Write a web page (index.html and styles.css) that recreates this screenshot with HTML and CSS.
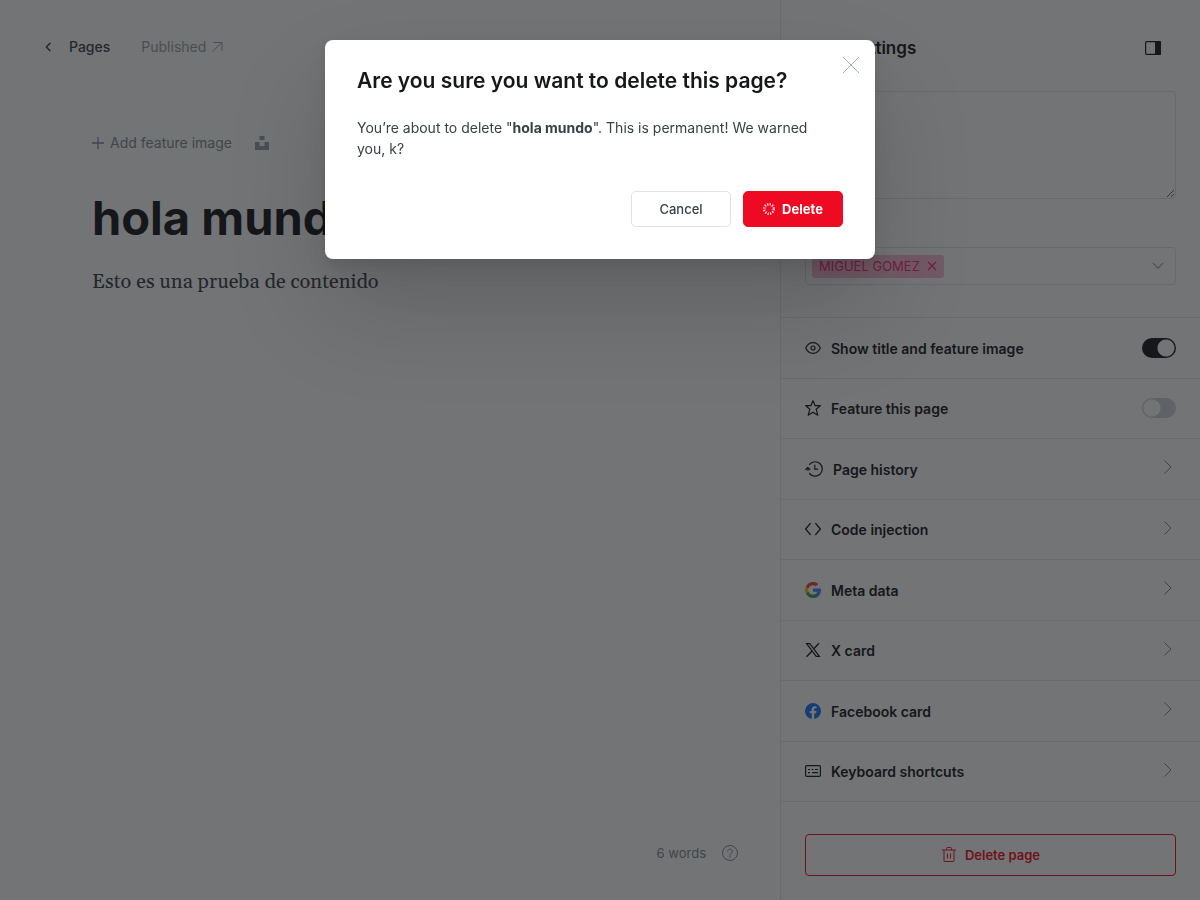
FILE: index.html
```html
<!DOCTYPE html>
<html lang="en">
<head>
<meta charset="utf-8">
<meta name="viewport" content="width=device-width, initial-scale=1">
<title>Delete page</title>
<link rel="stylesheet" href="styles.css">
</head>
<body>
<div class="app">
  <main class="editor">
    <header class="editor-header">
      <a class="back-link" href="#pages">
        <svg width="8" height="10" viewBox="0 0 8 10" fill="none" stroke="currentColor" stroke-width="1.5" stroke-linecap="round" stroke-linejoin="round"><path d="M6 1.300 2.300 5 6 8.700"/></svg>
        Pages
      </a>
      <a class="status-link" href="#published">
        Published
        <svg width="11" height="12" viewBox="0 0 11 12" fill="none" stroke="currentColor" stroke-width="1"><path d="M.5 10.500 10 1.500M1.500 1.500H10v8.500"/></svg>
      </a>
    </header>
    <article class="canvas">
      <div class="feature-image">
        <button class="add-image" type="button">
          <svg width="12" height="12" viewBox="0 0 12 12" fill="none" stroke="currentColor" stroke-width="1.3"><path d="M6 0v12M0 6h12"/></svg>
          Add feature image
        </button>
        <button class="unsplash" type="button" aria-label="Unsplash">
          <svg width="14" height="14" viewBox="0 0 14 14" fill="currentColor"><path d="M4.500 0h5v4h-5zM0 6h4.500v4h5V6H14v8H0z"/></svg>
        </button>
      </div>
      <h1 class="page-title">hola mundo</h1>
      <p class="page-body">Esto es una prueba de contenido</p>
    </article>
    <footer class="editor-footer">
      <span>6 words</span>
      <a class="help" href="#help" aria-label="Help">
        <svg width="16" height="16" viewBox="0 0 16 16" fill="none" stroke="currentColor" stroke-width="1"><circle cx="8" cy="8" r="7.500"/><path d="M5.700 6.300a2.300 2.300 0 1 1 3.500 2C8.400 8.800 8 9.200 8 10.200" stroke-linecap="round"/><circle cx="8" cy="12" r=".3"/></svg>
      </a>
    </footer>
  </main>

  <aside class="settings">
    <header class="settings-header">
      <h2 class="settings-title">Page settings</h2>
      <button class="panel-toggle" type="button" aria-label="Settings">
        <svg width="16" height="14" viewBox="0 0 16 14"><rect x=".6" y=".6" width="14.800" height="12.800" rx="1" fill="none" stroke="currentColor" stroke-width="1.200"/><path d="M10 0h5a1 1 0 0 1 1 1v12a1 1 0 0 1-1 1h-5z" fill="currentColor"/></svg>
      </button>
    </header>
    <form class="fields">
      <textarea class="excerpt" aria-label="Excerpt"></textarea>
      <div class="authors" role="group" aria-label="Authors">
        <span class="tag">MIGUEL GOMEZ
          <button class="tag-remove" type="button" aria-label="Remove">
            <svg width="10" height="10" viewBox="0 0 10 10" fill="none" stroke="currentColor" stroke-width="1.300"><path d="m1 1 8 8M9 1 1 9"/></svg>
          </button>
        </span>
        <svg class="down" width="12" height="8" viewBox="0 0 12 8" fill="none" stroke="currentColor" stroke-width="1.200"><path d="m1 1.200 5 5 5-5"/></svg>
      </div>
    </form>
    <ul class="options">
      <li class="option">
        <label class="row" for="show-title">
          <svg class="icon" viewBox="0 0 16 16" fill="none" stroke="currentColor" stroke-width="1.200"><path d="M.7 8S3.200 2.700 8 2.700 15.300 8 15.300 8 12.800 13.300 8 13.300.7 8 .7 8z"/><circle cx="8" cy="8" r="2"/></svg>
          <span>Show title and feature image</span>
          <input class="switch" id="show-title" type="checkbox" checked>
        </label>
      </li>
      <li class="option">
        <label class="row" for="feature-page">
          <svg class="icon" viewBox="0 0 16 16" fill="none" stroke="currentColor" stroke-width="1.200" stroke-linejoin="round"><path d="m8 .7 2.100 5h5.200l-4.200 3.500 1.700 6L8 12.200l-4.800 3 1.700-6L.7 5.700h5.200z"/></svg>
          <span>Feature this page</span>
          <input class="switch" id="feature-page" type="checkbox">
        </label>
      </li>
      <li class="option">
        <button class="row" type="button">
          <svg class="icon icon-wide" viewBox="0 0 18 16" fill="none" stroke="currentColor" stroke-width="1.200" stroke-linecap="round" stroke-linejoin="round"><path d="M4.600 3.300A7.200 7.200 0 1 1 4.500 12.500M2.900 9.300A7.200 7.200 0 0 1 3.100 6.600M.8 8.500l2-2 2 2M9.800 4.200v4h2.800"/></svg>
          <span>Page history</span>
          <svg class="chevron" viewBox="0 0 8 14"><path d="m.5.500 6.500 6.500-6.500 6.500"/></svg>
        </button>
      </li>
      <li class="option">
        <button class="row" type="button">
          <svg class="icon" viewBox="0 0 16 16" fill="none" stroke="currentColor" stroke-width="1.200" stroke-linecap="round" stroke-linejoin="round"><path d="M5.300 2.500.6 8l4.700 5.500M10.700 2.500 15.400 8l-4.700 5.500"/></svg>
          <span>Code injection</span>
          <svg class="chevron" viewBox="0 0 8 14"><path d="m.5.500 6.500 6.500-6.500 6.500"/></svg>
        </button>
      </li>
      <li class="option">
        <button class="row" type="button">
          <svg class="icon" viewBox="0 0 24 24"><path fill="#4285f4" d="M23.500 9.800H12v4.700h6.500c-.6 3-3 4.600-6.500 4.600l4 4.200C21.200 21.500 24 17.500 24 12.300c0-.9-.2-1.700-.5-2.500z"/><path fill="#34a853" d="M1.300 17.300C3.200 21.300 7.300 24 12 24c3 0 5.700-1 7.800-2.800L16 18.100c-1.100.7-2.500 1.100-4 1.100-3.200 0-5.800-2-6.800-4.900z"/><path fill="#fbbc05" d="M5.200 14.300a7 7 0 0 1 0-4.600l-3.900-3a12 12 0 0 0 0 10.600z"/><path fill="#ea4335" d="M12 4.800c1.700 0 3.200.6 4.400 1.600l3.500-3.500A12 12 0 0 0 1.300 6.700l3.900 3C6.200 6.800 8.800 4.800 12 4.800z"/></svg>
          <span>Meta data</span>
          <svg class="chevron" viewBox="0 0 8 14"><path d="m.5.500 6.500 6.500-6.500 6.500"/></svg>
        </button>
      </li>
      <li class="option">
        <button class="row" type="button">
          <svg class="icon" viewBox="0 0 16 16" fill="none" stroke="currentColor"><path stroke-width="1.200" d="M1.600 1.600h3.200l9.600 12.800h-3.200z"/><path stroke-width="1.300" d="m14 1.200-5.200 5.600M7.100 9 1.500 14.800"/></svg>
          <span>X card</span>
          <svg class="chevron" viewBox="0 0 8 14"><path d="m.5.500 6.500 6.500-6.500 6.500"/></svg>
        </button>
      </li>
      <li class="option">
        <button class="row" type="button">
          <svg class="icon" viewBox="0 0 24 24"><path fill="#1877f2" d="M24 12a12 12 0 1 0-13.900 11.900v-8.400h-3V12h3V9.400c0-3 1.800-4.700 4.500-4.700 1.300 0 2.700.2 2.700.2v3h-1.500c-1.500 0-2 .9-2 1.900V12h3.400l-.5 3.500h-2.800v8.400A12 12 0 0 0 24 12z"/></svg>
          <span>Facebook card</span>
          <svg class="chevron" viewBox="0 0 8 14"><path d="m.5.500 6.500 6.500-6.500 6.500"/></svg>
        </button>
      </li>
      <li class="option">
        <button class="row" type="button">
          <svg class="icon" viewBox="0 0 16 16" fill="none" stroke="currentColor" stroke-width="1.200"><rect x=".6" y="2.600" width="14.800" height="10.800" rx="1.200"/><path d="M3 6.500h2M6.500 6.500h2M10 6.500h3M3 9.700h2M7 9.700h6"/></svg>
          <span>Keyboard shortcuts</span>
          <svg class="chevron" viewBox="0 0 8 14"><path d="m.5.500 6.500 6.500-6.500 6.500"/></svg>
        </button>
      </li>
    </ul>
    <footer class="settings-footer">
      <button class="delete-page" type="button">
        <svg width="16" height="16" viewBox="0 0 16 16" fill="none" stroke="currentColor" stroke-width="1"><path d="M1 3h14M3 3v10.500a1 1 0 0 0 1 1h8a1 1 0 0 0 1-1V3M5.500 3V1.500a1 1 0 0 1 1-1h3a1 1 0 0 1 1 1V3M6.500 6.500v5M9.500 6.500v5"/></svg>
        Delete page
      </button>
    </footer>
  </aside>
</div>

<div class="backdrop">
  <section class="modal" role="dialog" aria-modal="true" aria-labelledby="modal-title">
    <h2 class="modal-title" id="modal-title">Are you sure you want to delete this page?</h2>
    <button class="modal-close" type="button" aria-label="Close">
      <svg width="16" height="16" viewBox="0 0 16 16" fill="none" stroke="currentColor" stroke-width=".7"><path d="m0 0 16 16M16 0 0 16"/></svg>
    </button>
    <p class="modal-text">You’re about to delete "<strong>hola mundo</strong>". This is permanent! We warned you, k?</p>
    <div class="modal-actions">
      <button class="btn" type="button">Cancel</button>
      <button class="btn btn-red" type="button">
        <svg width="12" height="12" viewBox="0 0 12 12" fill="none" stroke="currentColor" stroke-width="2.400"><circle cx="6" cy="6" r="4.800" stroke-dasharray="1.300 1.213" opacity=".85"/></svg>
        Delete
      </button>
    </div>
  </section>
</div>
</body>
</html>
```
FILE: styles.css
```css
* { box-sizing: border-box; }

body {
  margin: 0;
  background: #fff;
  color: #15171a;
  font-family: Inter, "Liberation Sans", sans-serif;
  font-size: 14px;
}

button {
  margin: 0;
  padding: 0;
  border: 0;
  background: none;
  color: inherit;
  font: inherit;
}

a { color: inherit; text-decoration: none; }
svg { display: block; flex: none; }

.app {
  display: grid;
  grid-template-columns: minmax(0, 1fr) 420px;
  min-height: 100vh;
}

/* Editor */
.editor { display: flex; flex-direction: column; }

.editor-header {
  display: flex;
  align-items: center;
  gap: 31px;
  padding: 35px 44px 0;
  line-height: 24px;
}

.back-link {
  display: flex;
  align-items: center;
  gap: 17px;
  color: #394047;
  font-weight: 500;
}

.status-link {
  display: flex;
  align-items: center;
  gap: 6px;
  color: #95a1ad;
}

.canvas { padding: 72px 92px 0; }

.feature-image {
  display: flex;
  align-items: center;
  gap: 23px;
  color: #7c8b9a;
  line-height: 24px;
}

.add-image { display: flex; align-items: center; gap: 6px; }
.unsplash { color: #95a1ad; }

.page-title {
  margin: 34px 0 0;
  font-size: 47px;
  line-height: 58px;
  font-weight: 700;
}

.page-body {
  margin: 19px 0 0;
  color: #394047;
  font-family: Georgia, Gelasio, "Liberation Serif", serif;
  font-size: 20px;
  line-height: 32px;
}

.editor-footer {
  display: flex;
  align-items: center;
  justify-content: flex-end;
  gap: 16px;
  margin-top: auto;
  padding: 0 42px 35px;
  color: #7c8b9a;
  font-size: 13px;
  line-height: 24px;
}

/* Settings panel */
.settings {
  display: flex;
  flex-direction: column;
  border-left: 1px solid #e6e9eb;
}

.settings-header {
  display: flex;
  align-items: center;
  justify-content: space-between;
  padding: 36px 39px 0 24px;
}

.settings-title {
  margin: 0;
  font-size: 17px;
  line-height: 24px;
  font-weight: 600;
}

.fields { padding: 31px 24px 32px; }

.excerpt,
.authors {
  width: 100%;
  border: 1px solid #e0e3e6;
  border-radius: 4px;
  background: #fff;
}

.excerpt { display: block; height: 108px; margin-bottom: 48px; }

.authors {
  display: flex;
  align-items: center;
  justify-content: space-between;
  height: 38px;
  padding: 0 11px 0 6px;
  color: #95a1ad;
}

.tag {
  display: flex;
  align-items: center;
  gap: 7px;
  padding: 0 7px;
  border-radius: 3px;
  background: #fabdd4;
  color: #f82d76;
  font-size: 13px;
  line-height: 23px;
}

.options {
  display: flex;
  flex: 1;
  flex-direction: column;
  margin: 0;
  padding: 0;
  border-bottom: 1px solid #e3e6e8;
  list-style: none;
}

.option {
  display: flex;
  flex: 1;
  border-top: 1px solid #e3e6e8;
}

.row {
  display: flex;
  flex: 1;
  align-items: center;
  gap: 10px;
  padding: 0 24px;
  font-weight: 600;
  line-height: 24px;
}

.row > span { padding-top: 2px; }

.icon { width: 16px; height: 16px; }
.icon-wide { width: 18px; }

.chevron {
  width: 8px;
  height: 14px;
  margin: 0 4px 3px auto;
  fill: none;
  stroke: #7c8b9a;
}

.switch {
  width: 34px;
  height: 20px;
  margin: 0 0 0 auto;
  border-radius: 10px;
  appearance: none;
  background: radial-gradient(circle at 10px 10px, #fff 8px, transparent 9px) #ced4d9;
}

.switch:checked {
  background: radial-gradient(circle at 24px 10px, #fff 8px, transparent 9px) #15171a;
}

.settings-footer { padding: 32px 24px 24px; }

.delete-page {
  display: flex;
  align-items: center;
  justify-content: center;
  gap: 8px;
  width: 100%;
  height: 42px;
  border: 1px solid #f50b23;
  border-radius: 4px;
  color: #f50b23;
  font-size: 13px;
  font-weight: 600;
}

/* Confirmation dialog */
.backdrop {
  position: fixed;
  inset: 0;
  padding: 40px 16px;
  background: rgba(21, 23, 26, .6);
}

.modal {
  position: relative;
  max-width: 550px;
  margin: 0 auto;
  padding: 26px 32px 32px;
  border-radius: 8px;
  background: #fff;
  box-shadow: 0 4px 6px rgba(0, 0, 0, .04), 0 12px 20px rgba(0, 0, 0, .08), 0 50px 100px rgba(0, 0, 0, .16);
}

.modal-title {
  margin: 0;
  font-size: 21px;
  line-height: 30px;
  font-weight: 600;
}

.modal-close {
  position: absolute;
  top: 17px;
  right: 16px;
  color: #7c8b9a;
}

.modal-text {
  margin: 21px 0 32px;
  padding-right: 20px;
  color: #394047;
  line-height: 21px;
}

.modal-actions { display: flex; justify-content: flex-end; gap: 12px; }

.btn {
  display: flex;
  align-items: center;
  justify-content: center;
  gap: 7px;
  width: 100px;
  height: 36px;
  border: 1px solid #dfe3e6;
  border-radius: 5px;
  color: #394047;
  font-size: 13px;
  font-weight: 500;
}

.btn-red {
  border-color: #ee0a22;
  background: #ee0a22;
  color: #fff;
  font-weight: 700;
}
```
